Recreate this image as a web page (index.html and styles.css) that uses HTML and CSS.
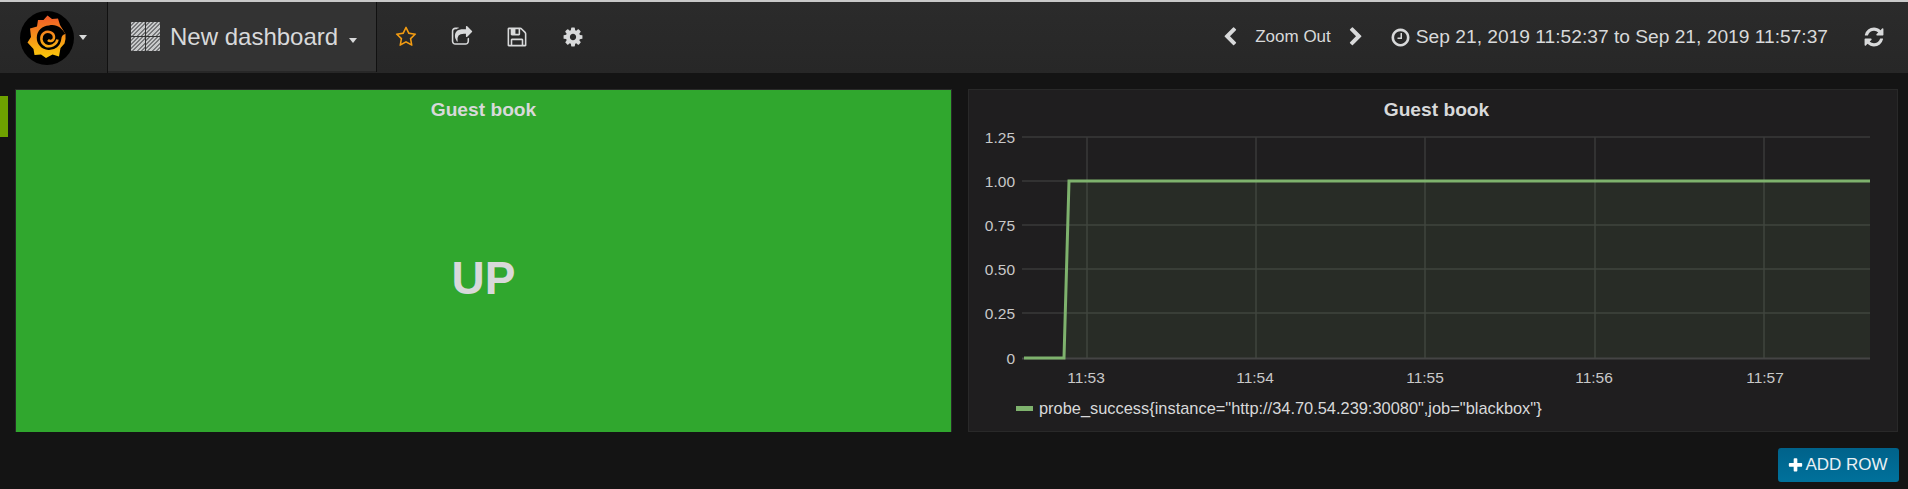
FILE: index.html
```html
<!DOCTYPE html>
<html lang="en">
<head>
<meta charset="UTF-8">
<meta name="viewport" content="width=device-width, initial-scale=1.0">
<title>New dashboard</title>
<link rel="stylesheet" href="styles.css">
</head>
<body>

<!-- Top navbar -->
<header class="navbar">
  <div class="nav-logo">
    <svg class="logo" width="56" height="56" viewBox="0 0 56 56">
      <defs>
        <linearGradient id="logoFill" gradientUnits="userSpaceOnUse" x1="0" y1="6" x2="0" y2="48">
          <stop offset="0" stop-color="#f05a28"/>
          <stop offset="1" stop-color="#fbca0a"/>
        </linearGradient>
      </defs>
      <circle cx="28" cy="28" r="27" fill="#000"/>
      <path fill="url(#logoFill)" d="M28.500 5.500L33 9L39 8.500L41 15L46.500 24L46.500 29L45.500 33.500L41.500 38L40 46.500L33.500 44.500L27 48L22 44.500L15.500 45L14.500 39L8.500 32.500L12 27L11 18.500L18 16.500L19 10L24.500 10Z"/>
      <path fill="#000" d="M30 15.500C37 13.500 43 18 46.500 24C44 24.500 42.500 26 42.300 29A12.300 12.300 0 1 1 30 15.500Z"/>
      <path fill="none" stroke="url(#logoFill)" stroke-width="2.500" d="M38.500 29.500C37.500 35 31 37.500 26.500 35.500C21.500 33 21 26 25 23C29.500 20 35 23 35 27C35 31 31 32 29 30"/>
    </svg>
    <span class="caret"></span>
  </div>
  <div class="nav-title">
    <span class="tiles"><i></i><i></i><i></i><i></i></span>
    <span class="title-text">New dashboard</span>
    <span class="caret"></span>
  </div>
  <div class="nav-actions">
    <svg class="icon star" viewBox="0 0 1792 1792"><path d="M1201 1004l306-297-422-62-189-382-189 382-422 62 306 297-73 421 378-199 377 199zm527-357q0 22-26 48l-363 354 86 500q1 7 1 20 0 50-41 50-19 0-40-12l-449-236-449 236q-22 12-40 12-21 0-31.500-14.500t-10.500-35.500q0-6 2-20l86-500-364-354q-25-27-25-48 0-37 56-46l502-73 225-455q19-41 49-41t49 41l225 455 502 73q56 9 56 46z"/></svg>
    <svg class="icon" viewBox="0 0 1792 1792"><path d="M1472 989v259q0 119-84.500 203.500t-203.500 84.500h-832q-119 0-203.500-84.500t-84.500-203.500v-832q0-119 84.500-203.500t203.500-84.500h255q13 0 22.500 9.500t9.500 22.500q0 27-26 32-77 26-133 60-10 4-16 4h-112q-66 0-113 47t-47 113v832q0 66 47 113t113 47h832q66 0 113-47t47-113v-214q0-19 18-29 28-13 54-37 16-16 35-8 21 9 21 29zm237-496l-384 384q-18 19-45 19-12 0-25-5-39-17-39-59v-192h-160q-323 0-438 131-119 137-74 473 3 23-20 34-8 2-12 2-16 0-26-13-10-14-21-31t-39.500-68.500-49.500-99.500-38.500-114-17.500-122q0-49 3.500-91t14-90 28-88 47-81.500 68.500-74 94.500-61.500 124.500-48.500 159.500-30.500 196.500-11h160v-192q0-42 39-59 13-5 25-5 26 0 45 19l384 384q19 19 19 45t-19 45z"/></svg>
    <svg class="icon" viewBox="0 0 1792 1792"><path d="M512 1536h768v-384h-768v384zm896 0h128v-896q0-14-10-38.500t-20-34.500l-281-281q-10-10-34-20t-39-10v416q0 40-28 68t-68 28h-576q-40 0-68-28t-28-68v-416h-128v1280h128v-416q0-40 28-68t68-28h832q40 0 68 28t28 68v416zm-384-928v-320q0-13-9.500-22.500t-22.500-9.500h-192q-13 0-22.500 9.500t-9.500 22.500v320q0 13 9.500 22.500t22.500 9.500h192q13 0 22.500-9.500t9.500-22.500zm640 32v928q0 40-28 68t-68 28h-1344q-40 0-68-28t-28-68v-1344q0-40 28-68t68-28h928q40 0 88 20t76 48l280 280q28 28 48 76t20 88z"/></svg>
    <svg class="icon" viewBox="0 0 1792 1792"><path d="M1152 896q0-106-75-181t-181-75-181 75-75 181 75 181 181 75 181-75 75-181zm512-109v222q0 12-8 23t-20 13l-185 28q-19 54-39 91 35 50 107 138 10 12 10 25t-9 23q-27 37-99 108t-94 71q-12 0-26-9l-138-108q-44 23-91 38-16 136-29 186-7 28-36 28h-222q-14 0-24.500-8.500t-11.500-21.500l-28-184q-49-16-90-37l-141 107q-10 9-25 9-14 0-25-11-126-114-165-168-7-10-7-23 0-12 8-23 15-21 51-66.500t54-70.500q-27-50-41-99l-183-27q-13-2-21-12.500t-8-23.500v-222q0-12 8-23t19-13l186-28q14-46 39-92-40-57-107-138-10-12-10-24 0-10 9-23 26-36 98.500-107.500t94.500-71.500q13 0 26 10l138 107q44-23 91-38 16-136 29-186 7-28 36-28h222q14 0 24.500 8.500t11.500 21.500l28 184q49 16 90 37l142-107q9-9 24-9 13 0 25 10 129 119 165 170 7 8 7 22 0 12-8 23-15 21-51 66.500t-54 70.500q26 50 41 98l183 28q13 2 21 12.500t8 23.500z"/></svg>
  </div>
  <div class="nav-time">
    <svg class="icon-sm" viewBox="0 0 1792 1792"><path d="M1427 301l-531 531 531 531q19 19 19 45t-19 45l-166 166q-19 19-45 19t-45-19l-742-742q-19-19-19-45t19-45l742-742q19-19 45-19t45 19l166 166q19 19 19 45t-19 45z"/></svg>
    <span class="zoom-out">Zoom Out</span>
    <svg class="icon-sm" viewBox="0 0 1792 1792"><path d="M1363 877l-742 742q-19 19-45 19t-45-19l-166-166q-19-19-19-45t19-45l531-531-531-531q-19-19-19-45t19-45l166-166q19-19 45-19t45 19l742 742q19 19 19 45t-19 45z"/></svg>
    <span class="range">
      <svg class="icon-clock" viewBox="0 0 1792 1792"><path d="M1024 544v448q0 14-9 23t-23 9h-320q-14 0-23-9t-9-23v-64q0-14 9-23t23-9h224v-352q0-14 9-23t23-9h64q14 0 23 9t9 23zm416 352q0-148-73-273t-198-198-273-73-273 73-198 198-73 273 73 273 198 198 273 73 273-73 198-198 73-273zm224 0q0 209-103 385.500t-279.500 279.500-385.500 103-385.500-103-279.500-279.500-103-385.500 103-385.500 279.500-279.500 385.500-103 385.500 103 279.500 279.500 103 385.500z"/></svg>
      Sep 21, 2019 11:52:37 to Sep 21, 2019 11:57:37
    </span>
    <svg class="icon" viewBox="0 0 1792 1792"><path d="M1639 1056q0 5-1 7-64 268-268 434.500t-478 166.500q-146 0-282.500-55t-243.500-157l-129 129q-19 19-45 19t-45-19-19-45v-448q0-26 19-45t45-19h448q26 0 45 19t19 45-19 45l-137 137q71 66 161 102t187 36q134 0 250-65t186-179q11-17 53-117 8-23 30-23h192q13 0 22.500 9.500t9.500 22.500zm25-800v448q0 26-19 45t-45 19h-448q-26 0-45-19t-19-45 19-45l138-138q-148-137-349-137-134 0-250 65t-186 179q-11 17-53 117-8 23-30 23h-199q-13 0-22.500-9.500t-9.500-22.500v-7q65-268 270-434.500t480-166.500q146 0 284 55.500t245 156.500l130-129q19-19 45-19t45 19 19 45z"/></svg>
  </div>
</header>

<!-- Dashboard row -->
<main class="row">
  <div class="row-gutter"><span class="row-tab"></span></div>

  <section class="panel panel-status">
    <h2 class="panel-title">Guest book</h2>
    <div class="status-value">UP</div>
  </section>

  <section class="panel panel-graph">
    <h2 class="panel-title">Guest book</h2>
    <svg class="chart" width="928" height="263" viewBox="969 129 928 263">
      <!-- viewBox uses page coordinates -->
      <g class="grid">
        <path d="M1022 137H1870M1022 181H1870M1022 225H1870M1022 269H1870M1022 313H1870"/>
        <path d="M1087 137V358M1256 137V358M1425 137V358M1595 137V358M1764 137V358"/>
      </g>
      <path class="area" d="M1064 358L1069 181H1870V358Z"/>
      <path class="axis" d="M1022 358.500H1870"/>
      <path class="line" d="M1024 358H1064L1069 181H1870"/>
      <g class="labels-y">
        <text x="1015" y="143">1.25</text>
        <text x="1015" y="187">1.00</text>
        <text x="1015" y="231">0.75</text>
        <text x="1015" y="275">0.50</text>
        <text x="1015" y="319">0.25</text>
        <text x="1015" y="364">0</text>
      </g>
      <g class="labels-x">
        <text x="1086" y="383">11:53</text>
        <text x="1255" y="383">11:54</text>
        <text x="1425" y="383">11:55</text>
        <text x="1594" y="383">11:56</text>
        <text x="1765" y="383">11:57</text>
      </g>
    </svg>
    <div class="legend">
      <span class="legend-swatch"></span>
      <span class="legend-text">probe_success{instance="http://34.70.54.239:30080",job="blackbox"}</span>
    </div>
  </section>
</main>

<div class="row-actions">
  <button class="btn-add">
    <svg class="icon-plus" viewBox="0 0 1792 1792"><path d="M1600 736v192q0 40-28 68t-68 28h-416v416q0 40-28 68t-68 28h-192q-40 0-68-28t-28-68v-416h-416q-40 0-68-28t-28-68v-192q0-40 28-68t68-28h416v-416q0-40 28-68t68-28h192q40 0 68 28t28 68v416h416q40 0 68 28t28 68z"/></svg>ADD ROW
  </button>
</div>

</body>
</html>
```

FILE: styles.css
```css
body {
  font-family: "Liberation Sans", Arial, sans-serif;
  margin: 0;
  padding: 0;
  background-color: #141414;
  color: #d8d9da;
  overflow: hidden;
}

/* navbar */
.navbar {
  display: flex;
  height: 71px;
  border-top: 2px solid #c9c9c9;
  background-color: #292929;
  background-image: linear-gradient(#2b2b2b, #272727);
}

.nav-logo {
  display: flex;
  align-items: center;
  width: 108px;
  box-sizing: border-box;
  padding-left: 19px;
  border-right: 1px solid #111;
}

.logo {
  flex: none;
}

.caret {
  display: inline-block;
  width: 0;
  height: 0;
  border-top: 5px solid #d8d9da;
  border-left: 4.500px solid transparent;
  border-right: 4.500px solid transparent;
}

.nav-logo .caret {
  margin-left: 4px;
}

.nav-title {
  display: flex;
  align-items: center;
  width: 268px;
  height: 69px;
  box-sizing: border-box;
  padding-left: 23px;
  background-color: #333;
  font-size: 24px;
}

.tiles {
  display: grid;
  grid-template-columns: 14px 14px;
  grid-template-rows: 14px 14px;
  gap: 1px;
  margin-right: 10px;
}

.tiles i {
  background: repeating-linear-gradient(135deg, #c8c9ca 0, #c8c9ca 1.500px, #77787a 1.500px, #77787a 3px);
  border-radius: 1px;
}

.title-text {
  white-space: nowrap;
}

.nav-title .caret {
  margin: 8px 0 0 11px;
}

.nav-actions {
  display: flex;
  align-items: center;
  gap: 33.500px;
  padding-left: 18px;
  border-left: 1px solid #111;
  margin-bottom: 1px;
}

.icon {
  width: 22px;
  height: 22px;
  fill: #d8d9da;
  display: block;
}

.star {
  fill: #f39c12;
}

.nav-time {
  display: flex;
  align-items: center;
  margin-left: auto;
  padding-right: 23px;
  margin-bottom: 1px;
}

.icon-sm {
  width: 20px;
  height: 20px;
  fill: #d8d9da;
}

.zoom-out {
  font-size: 17px;
  margin: 0 15px;
}

.range {
  display: flex;
  align-items: center;
  gap: 5px;
  font-size: 19.200px;
  margin: 0 35px 0 24px;
  white-space: nowrap;
}

.icon-clock {
  width: 21px;
  height: 21px;
  fill: #d8d9da;
}

/* dashboard row */
.row {
  display: flex;
  height: 343px;
  margin-top: 16px;
  padding-right: 10px;
}

.row-gutter {
  width: 15px;
  flex: none;
}

.row-tab {
  display: block;
  width: 8px;
  height: 41px;
  margin-top: 7px;
  background-color: #6ea100;
}

.panel {
  display: flex;
  flex-direction: column;
  box-sizing: border-box;
}

.panel-title {
  margin: 0;
  padding-top: 9px;
  height: 39px;
  box-sizing: border-box;
  font-size: 19.200px;
  line-height: 22px;
  font-weight: bold;
  text-align: center;
}

.panel-status {
  width: 937px;
  margin-right: 16px;
  background-color: #30a72e;
  border: 1px solid #292929;
  border-bottom: none;
}

.status-value {
  flex: 1;
  display: flex;
  align-items: center;
  justify-content: center;
  padding-bottom: 6px;
  font-size: 46px;
  font-weight: bold;
}

.panel-graph {
  flex: 1;
  background-color: #1f1e1f;
  border: 1px solid #292929;
}

.panel-graph .panel-title {
  padding-left: 7px;
}

.chart {
  display: block;
}

.grid path {
  fill: none;
  stroke: #3a3a3a;
  stroke-width: 1.500;
}

.axis {
  fill: none;
  stroke: #444;
  stroke-width: 2;
}

.area {
  fill: #7eb26d;
  fill-opacity: 0.1;
}

.line {
  fill: none;
  stroke: #7eb26d;
  stroke-width: 3;
}

.labels-y text, .labels-x text {
  font-size: 15.500px;
  fill: #c8c8c8;
}

.labels-y text {
  text-anchor: end;
}

.labels-x text {
  text-anchor: middle;
}

.legend {
  display: flex;
  align-items: center;
  padding: 0 0 4px 47px;
  height: 36px;
  box-sizing: border-box;
  font-size: 16.400px;
}

.legend-swatch {
  width: 17px;
  height: 5px;
  margin-right: 6px;
  background-color: #7eb26d;
}

/* add row button */
.row-actions {
  display: flex;
  justify-content: flex-end;
  margin-top: 16px;
  padding-right: 9px;
}

.btn-add {
  display: flex;
  align-items: center;
  justify-content: center;
  width: 121px;
  height: 34px;
  padding: 0 2px 0 0;
  border: none;
  border-radius: 3px;
  background-image: linear-gradient(#00628a, #00719b);
  color: #e8f0f4;
  font-family: inherit;
  font-size: 17px;
}

.icon-plus {
  width: 17px;
  height: 17px;
  fill: #fff;
  margin-right: 1px;
}
```
